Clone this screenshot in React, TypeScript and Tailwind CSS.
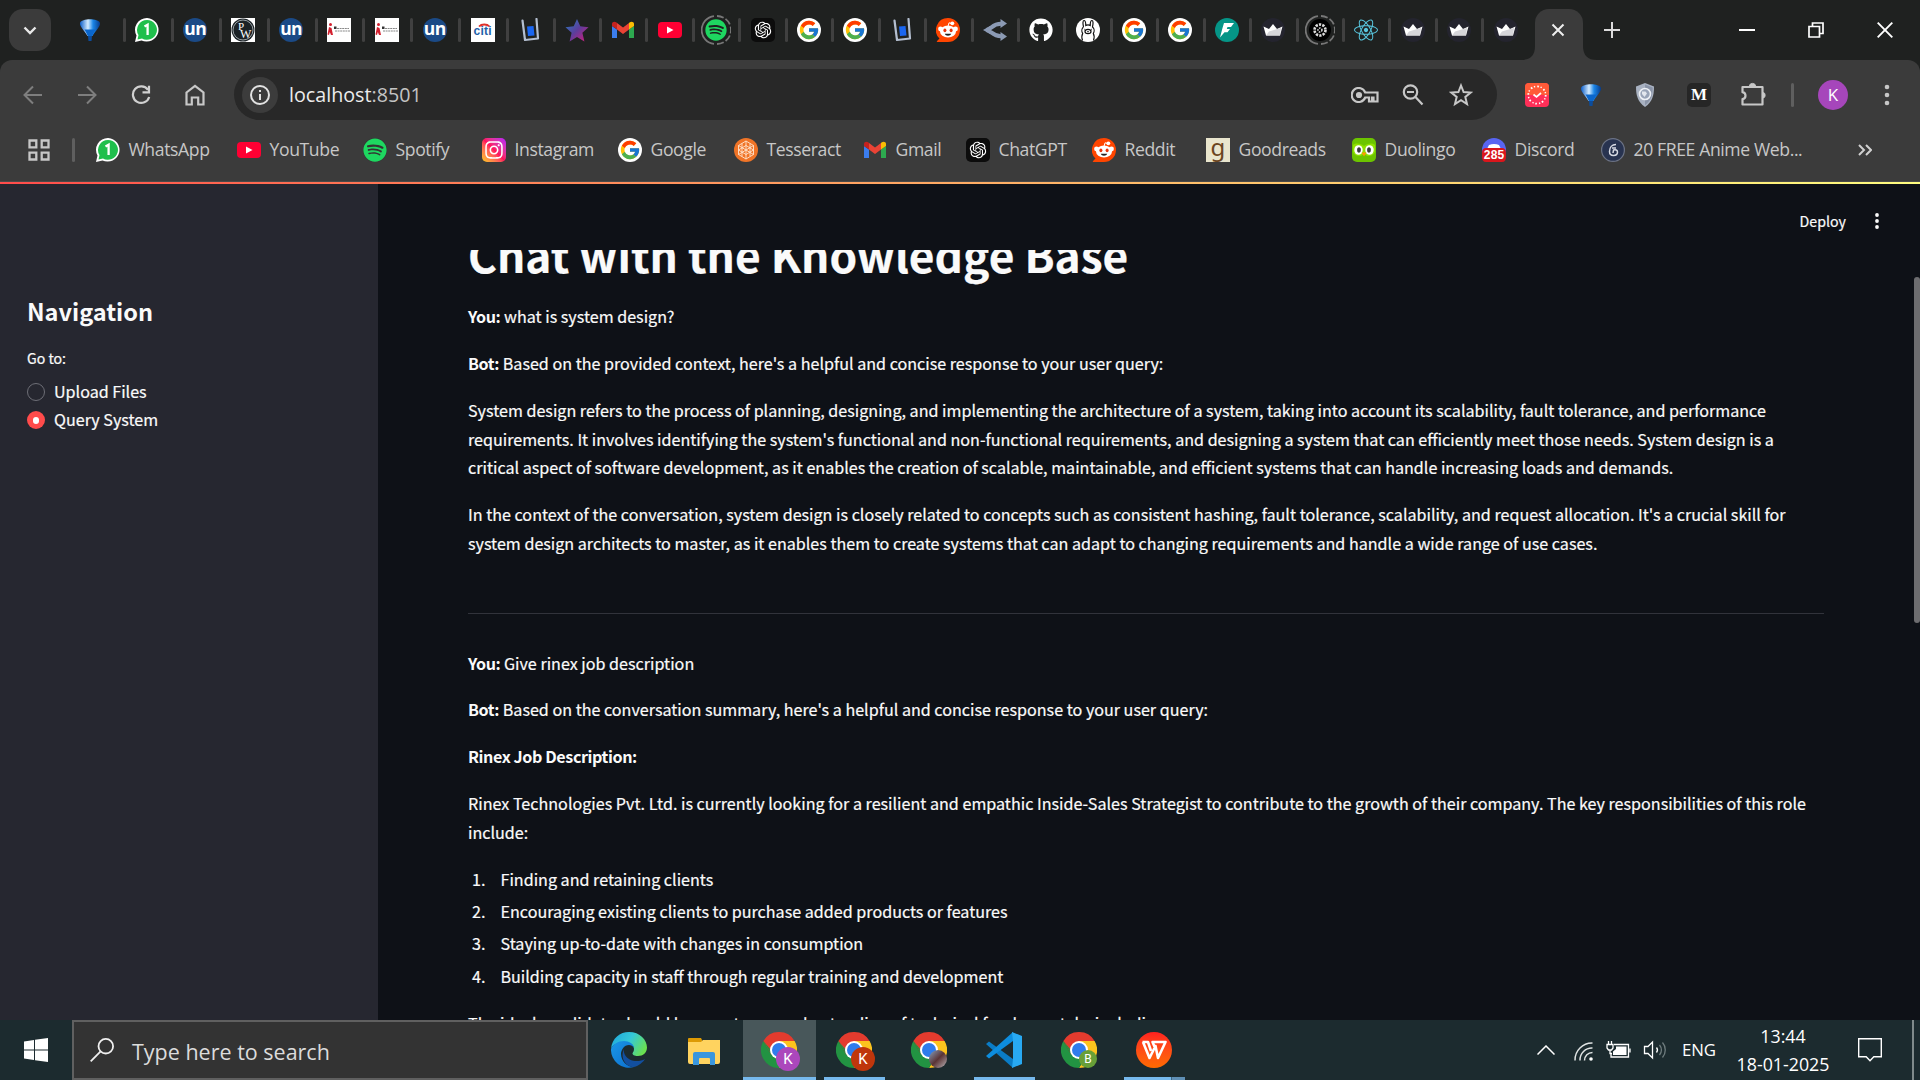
import React, { ReactNode, useId } from "react";
import { FcGoogle } from "react-icons/fc";
import { FaSpotify, FaInstagram, FaGithub, FaReact } from "react-icons/fa";
import { RiOpenaiFill } from "react-icons/ri";

/* ---------- site icons, all 24px ---------- */

const Balloon = () => {
  const g = useId();
  return (
    <svg viewBox="0 0 24 24" className="h-6 w-6">
      <defs>
        <linearGradient id={g} x1="0" x2="1">
          <stop offset="0" stopColor="#0a5cc8" />
          <stop offset=".4" stopColor="#d5ecff" />
          <stop offset=".65" stopColor="#1b86e8" />
          <stop offset="1" stopColor="#063a8a" />
        </linearGradient>
      </defs>
      <path d="M2 5C3.500 0 20.500 0 22 5c.8 3-5 8.500-7.500 13h-5C7 13.500 1.200 8 2 5Z" fill={`url(#${g})`} />
      <path d="M6.500 11.500h11C16.500 13.500 15 16 14.300 18h-4.600C9 16 7.500 13.500 6.500 11.500Z" fill="#0a66cc" />
      <path d="M10 18h4l-.5 5h-3Z" fill="#0c4c9c" />
    </svg>
  );
};
const WhatsApp = () => (
  <svg viewBox="0 0 24 24" className="h-6 w-6">
    <path d="M12.200 0A12 11.800 0 0 0 1.500 17.500L0 24l6.500-1.500A12 11.800 0 1 0 12.200 0Z" fill="#fff" />
    <path d="M12.200 2A10 9.900 0 0 0 3.500 17l-1 4.500 4.500-1A10 9.900 0 1 0 12.200 2Z" fill="#1fbf4c" />
    <path d="M9.500 8.500 12.600 6.700V17" fill="none" stroke="#fff" strokeWidth="2.300" />
  </svg>
);
const Un = () => (
  <span className="flex h-6 w-6 items-center justify-center rounded-full bg-[#1b4a86] pb-[3px] font-['Open_Sans'] text-[17.500px] leading-none font-bold tracking-[-0.03em] text-white">
    un
  </span>
);
const Pw = () => (
  <span className="flex h-6 w-6 items-center justify-center bg-white">
    <svg viewBox="0 0 24 24" className="h-6 w-6">
      <circle cx="12" cy="12" r="11.500" fill="#1b2226" />
      <circle cx="12" cy="12" r="10" fill="none" stroke="#b9c0c4" strokeWidth=".8" />
      <text x="7" y="12" fontSize="11" fill="#fff" fontFamily="Liberation Serif">P</text>
      <text x="9" y="20" fontSize="12" fill="#fff" fontFamily="Liberation Serif">W</text>
    </svg>
  </span>
);
const Company = () => (
  <svg viewBox="0 0 24 24" className="h-6 w-6">
    <path d="M0 0h24v24H0z" fill="#fff" />
    <circle cx="3.500" cy="6.500" r="1.500" fill="#d3202f" />
    <path d="M.5 16.500 2 9l2.500 1 1.500 7H4l-1.200-3-.8 3Z" fill="#d3202f" />
    <path d="M7 8.500h2.500v2.500H7z" fill="#333" />
    <path d="M10 10.500h12M8 13h15" stroke="#888" strokeWidth="1" strokeDasharray="2 .6" />
  </svg>
);
const Citi = () => (
  <svg viewBox="0 0 24 24" className="h-6 w-6">
    <path d="M0 0h24v24H0z" fill="#fff" />
    <path d="M8 8.500C10.500 5.800 16 5.800 18.500 8.500" fill="none" stroke="#e0312b" strokeWidth="1.800" />
    <text x="2.500" y="16.500" fontSize="12" fontWeight="700" fill="#1f62a8" fontFamily="Liberation Sans" textLength="18">citi</text>
  </svg>
);
const Glass = () => (
  <svg viewBox="0 0 24 24" className="h-6 w-6">
    <path d="M4.500 2.500 7 22 20 20.500 18.500 1" fill="none" stroke="#b4bfd0" strokeWidth="2.200" strokeLinejoin="round" strokeLinecap="round" />
    <path d="M9 8.500 15.500 8 16.500 17.500 10 18Z" fill="#1a66f0" />
  </svg>
);
const Star = () => {
  const g = useId();
  return (
    <svg viewBox="0 0 24 24" className="h-6 w-6">
      <defs>
        <linearGradient id={g} x1="0" x2="1" y1="0" y2="1">
          <stop offset="0.100" stopColor="#2f72b8" />
          <stop offset=".5" stopColor="#5d3d9c" />
          <stop offset="1" stopColor="#d81b7a" />
        </linearGradient>
      </defs>
      <path d="M12 1l3.300 7.300 8.200 1-6.100 5.500 2 8.700L12 19l-7.400 4.500 2-8.700L.5 9.300l8.200-1Z" fill={`url(#${g})`} />
    </svg>
  );
};
const Gmail = () => (
  <svg viewBox="0 0 24 24" className="h-6 w-6">
    <path d="M1 20V8l5 3.500V20Z" fill="#3b7ded" />
    <path d="M18 20v-8.500L23 8v12Z" fill="#2da94f" />
    <path d="M1 8V6c0-2.200 2.500-3 4.200-1.800L6 5v6.500Z" fill="#c5221f" />
    <path d="M18 11.500V5l.8-.8C20.500 3 23 3.800 23 6v2Z" fill="#fbbc04" />
    <path d="M6 11.500V5l6 4.600L18 5v6.500L12 16Z" fill="#ea4335" />
  </svg>
);
const YouTube = () => (
  <span className="flex h-4 w-6 items-center justify-center rounded-[4px] bg-[#ff0033]">
    <svg viewBox="0 0 8 8" className="h-2 w-2"><path d="M1 .5 7.500 4 1 7.500Z" fill="#fff" /></svg>
  </span>
);
const Spotify = () => (
  <span className="flex h-6 w-6 items-center justify-center rounded-full bg-[#333]">
    <FaSpotify className="h-6 w-6 text-[#1ed760]" />
  </span>
);
const Gpt = () => (
  <span className="flex h-6 w-6 items-center justify-center rounded-[5px] bg-[#0c0c0c]">
    <RiOpenaiFill className="h-[20px] w-[20px] text-white" />
  </span>
);
const Google = () => (
  <span className="flex h-6 w-6 items-center justify-center rounded-full bg-white">
    <FcGoogle className="h-[22px] w-[22px]" />
  </span>
);
const Reddit = () => (
  <svg viewBox="0 0 24 24" className="h-6 w-6">
    <path d="M12 0a12 12 0 0 0-8.500 20.500L1 23c-.5.500-.2 1 .4 1H12A12 12 0 0 0 12 0Z" fill="#ff4500" />
    <circle cx="4.500" cy="11" r="2.400" fill="#fff" />
    <circle cx="19.500" cy="11" r="2.400" fill="#fff" />
    <path d="M12 8.500 13 4.800l3 .8" fill="none" stroke="#fff" strokeWidth="1" />
    <circle cx="16.300" cy="5.300" r="1.900" fill="#fff" />
    <ellipse cx="12" cy="13.500" rx="8" ry="5.900" fill="#fff" />
    <ellipse cx="8.900" cy="12.300" rx="1.500" ry="1.900" fill="#e8340c" />
    <ellipse cx="15.100" cy="12.300" rx="1.500" ry="1.900" fill="#e8340c" />
    <path d="M8.800 15.700h6.400c-.5 2.600-5.900 2.600-6.400 0Z" fill="#222" />
  </svg>
);
const Fork = () => (
  <svg viewBox="0 0 24 24" className="h-6 w-6">
    <path d="M3 12C8 12 9 5.800 18 5.800M3 12c5 0 6 6.200 15 6.200" fill="none" stroke="#8b9ab4" strokeWidth="4" />
    <path d="M17.500 1 24 5.500 17.500 10ZM17.500 14l6.500 4.500-6.500 4.500ZM0 12 7 8v8Z" fill="#8b9ab4" />
  </svg>
);
const Llama = () => (
  <span className="flex h-6 w-6 items-center justify-center rounded-full bg-white">
    <svg viewBox="0 0 24 24" className="h-6 w-6" fill="none" stroke="#111" strokeWidth="1.200">
      <path d="M7.500 9C6.500 5 7 2.500 8 2.500S9.800 5 9.800 7.500c1.400-.7 3-.7 4.400 0 0-2.500.8-5 1.800-5s1.500 2.500.5 6.500c2 1.500 2 4.500.8 6.500 1.200 2 1 4.500.2 7M7.500 9c-2 1.500-2 4.500-.8 6.500-1.200 2-1 4.500-.2 7" />
      <ellipse cx="12" cy="13.500" rx="3" ry="2.200" />
      <path d="M8.500 11.500h.6M15 11.500h.6M12 13v1.200" strokeWidth="1.400" />
    </svg>
  </span>
);
const Flash = () => (
  <svg viewBox="0 0 24 24" className="h-6 w-6">
    <circle cx="12" cy="12" r="12" fill="#059587" />
    <path d="M9 5h10l-3 4h-3.500L11.800 11H15l-2.500 3.200h-3L5 19.500 7.500 10Z" fill="#fff" />
  </svg>
);
const Crown = () => (
  <svg viewBox="0 0 24 24" className="h-6 w-6">
    <circle cx="12" cy="12" r="12" fill="#24242e" />
    <path d="M2.500 8.500 8 11 12 6 16 11 21.500 8.500 19 17.500H5Z" fill="#fff" />
    <path d="M5 17.500 8 13.500l8-2.500 4-1-1 7.500Z" fill="#d6d6da" />
  </svg>
);
const DashedRing = ({ children }: { children: ReactNode }) => (
  <span className="relative flex h-[30px] w-[30px] items-center justify-center">
    <svg viewBox="0 0 30 30" className="absolute inset-0 h-[30px] w-[30px]">
      <path d="M13 1.100a14 14 0 0 0 0 27.800" fill="none" stroke="#777" strokeWidth="1.800" />
      <path d="M16 29a14 14 0 0 0 0-28" fill="none" stroke="#777" strokeWidth="1.800" strokeDasharray="7 2.200" />
    </svg>
    {children}
  </span>
);
const Tesseract = () => (
  <svg viewBox="0 0 24 24" className="h-6 w-6">
    <circle cx="12" cy="12" r="12" fill="#f07427" />
    <g fill="none" stroke="#ffe5d0" strokeWidth=".9">
      <path d="M12 3l7.500 4.500v9L12 21l-7.500-4.500v-9ZM12 3v18M4.500 7.500 12 12l7.500-4.500M4.500 16.500 12 12l7.500 4.500M8 5.400v13M16 5.400v13M4.500 12 12 7.500 19.500 12 12 16.500Z" />
    </g>
  </svg>
);
const Goodreads = () => (
  <span className="flex h-6 w-6 items-center justify-center bg-[#e9e5cd] pb-[6px] font-['Noto_Sans'] text-[24px] leading-none text-[#6b4420]">g</span>
);
const Duolingo = () => (
  <svg viewBox="0 0 24 24" className="h-6 w-6">
    <rect width="24" height="24" rx="5" fill="#6cc400" />
    <path d="M1 7c4-3 8-1 11 1 3-2 7-4 11-1v7c-2 5-8 5-11 2-3 3-9 3-11-2Z" fill="#8ee000" />
    <ellipse cx="6.500" cy="12" rx="4.200" ry="4.800" fill="#fff" />
    <ellipse cx="17.500" cy="12" rx="4.200" ry="4.800" fill="#fff" />
    <ellipse cx="7" cy="12" rx="1.900" ry="2.800" fill="#3c3c3c" />
    <ellipse cx="17" cy="12" rx="1.900" ry="2.800" fill="#3c3c3c" />
    <path d="M9.500 14.500h5L12 18.500Z" fill="#ff9a00" />
  </svg>
);
const Discord = () => (
  <svg viewBox="0 0 24 24" className="h-6 w-6">
    <circle cx="12" cy="12" r="12" fill="#5865f2" />
    <path d="M7 7c3-1.500 7-1.500 10 0l2 4H5Z" fill="#fff" />
    <path d="M0 15q0-5 4-5h16q4 0 4 5v4q0 5-4 5H4q-4 0-4-5Z" fill="#d9161c" />
    <text x="1.800" y="21.300" fontSize="12" fontWeight="700" fill="#fff" fontFamily="Liberation Sans" textLength="20.500">285</text>
  </svg>
);
const Anime = () => (
  <svg viewBox="0 0 24 24" className="h-6 w-6">
    <circle cx="12" cy="12" r="11.400" fill="#283350" stroke="#6c7385" strokeWidth="1.200" />
    <path d="M15 6.500c-4 0-6.500 3-6.500 7 0 3 2 4 4 4 2.500 0 4-1.500 4-3.500s-2-2.800-4-2l-.5 3M11 10h4" fill="none" stroke="#d7dae3" strokeWidth="1.500" />
  </svg>
);
const Insta = () => (
  <span className="flex h-6 w-6 items-center justify-center rounded-[5px] bg-linear-to-tr from-[#ffc800] via-[#ff0f5b] to-[#b800ff]">
    <FaInstagram className="h-[20px] w-[20px] text-white" />
  </span>
);

/* ---------- tab strip ---------- */

const wideTabs = [WhatsApp, Un, Pw, Un, Company, Company, Un, Citi];
const React24 = () => <FaReact className="h-6 w-6 text-[#58c4dc]" />;
const SpotifyRing = () => <DashedRing><FaSpotify className="h-[22px] w-[22px] text-[#1ed760]" /></DashedRing>;
const DotRing = () => (
  <DashedRing>
    <svg viewBox="0 0 24 24" className="h-6 w-6">
      <circle cx="12" cy="12" r="11" fill="#000" />
      <circle cx="12" cy="12" r="5.500" fill="none" stroke="#ddd" strokeWidth="2.600" strokeDasharray="2.300 1.150" />
      <circle cx="12" cy="12" r="2" fill="none" stroke="#ddd" strokeWidth="1.500" strokeDasharray="1.500 1" />
    </svg>
  </DashedRing>
);
const Hub = () => <FaGithub className="h-6 w-6 text-white" />;
const tabs = [Glass, Star, Gmail, YouTube, SpotifyRing, Gpt, Google, Google, Glass, Reddit, Fork, Hub, Llama, Google, Google, Flash, Crown, DotRing, React24, Crown, Crown, Crown];

function TabStrip() {
  return (
    <div className="flex h-[60px] items-center bg-[#1f2120]">
      <div className="ml-[9px] flex h-[42px] w-[42px] shrink-0 items-center justify-center rounded-[14px] bg-[#3b3b3b]">
        <svg viewBox="0 0 14 9" className="h-[9px] w-[14px]"><path d="M1.500 1.500 7 7l5.500-5.500" fill="none" stroke="#e8e8e8" strokeWidth="2.400" /></svg>
      </div>
      <div className="flex w-[72px] shrink-0 justify-center pl-[6px]"><Balloon /></div>
      {wideTabs.map((Icon, i) => (
        <div key={i} className="flex w-[47.900px] shrink-0 items-center">
          <span className="h-6 w-[3px] rounded-full bg-[#404040]" />
          <span className="flex flex-1 justify-center pr-[2px]"><Icon /></span>
        </div>
      ))}
      {tabs.map((Icon, i) => (
        <div key={i} className="flex w-[46.450px] shrink-0 items-center">
          <span className="h-6 w-[3px] rounded-full bg-[#404040]" />
          <span className="flex flex-1 justify-center pr-[1px]"><Icon /></span>
        </div>
      ))}
      <div className="-ml-[7px] flex h-[60px] shrink-0 items-end">
        <svg viewBox="0 0 14 14" className="h-[14px] w-[14px]"><path d="M0 14Q14 14 14 0V14Z" fill="#3b3b3b" /></svg>
        <div className="flex h-[51px] w-[48px] items-start justify-center rounded-t-[14px] bg-[#3b3b3b] pt-[14px] pr-[2px]">
          <svg viewBox="0 0 14 14" className="h-[14px] w-[14px]"><path d="M1.500 1.500l11 11M12.500 1.500l-11 11" stroke="#eee" strokeWidth="2" /></svg>
        </div>
        <svg viewBox="0 0 14 14" className="h-[14px] w-[14px]"><path d="M14 14Q0 14 0 0V14Z" fill="#3b3b3b" /></svg>
      </div>
      <svg viewBox="0 0 16 16" className="ml-[7px] h-4 w-4 shrink-0"><path d="M8 0v16M0 8h16" stroke="#dcdcdc" strokeWidth="2" /></svg>
      <div className="mr-[1px] ml-auto flex shrink-0">
        <span className="flex w-[69px] items-center justify-center"><svg viewBox="0 0 16 16" className="h-4 w-4"><path d="M0 8h16" stroke="#fff" strokeWidth="2" /></svg></span>
        <span className="flex w-[69px] items-center justify-center">
          <svg viewBox="0 0 16 16" className="h-4 w-4" fill="none" stroke="#fff" strokeWidth="1.700"><path d="M1 4.500h10.500V15H1zM4.500 4V1H15v10.500h-3" /></svg>
        </span>
        <span className="flex w-[69px] items-center justify-center"><svg viewBox="0 0 16 16" className="h-4 w-4"><path d="M.7.700l14.600 14.600M15.300.700.7 15.300" stroke="#fff" strokeWidth="1.900" /></svg></span>
      </div>
    </div>
  );
}

/* ---------- toolbar ---------- */

const Cell = ({ children, w = "w-[54px]" }: { children: ReactNode; w?: string }) => (
  <span className={`flex shrink-0 items-center justify-center ${w}`}>{children}</span>
);

function Toolbar() {
  return (
    <div className="bg-[#1f2120]">
      <div className="flex h-[69px] items-center rounded-t-[12px] bg-[#3b3b3b] pl-[6px]">
        <Cell><svg viewBox="0 0 20 20" className="h-5 w-5" fill="none" stroke="#7e7e7e" strokeWidth="2"><path d="M19 10H2M10 1.500 1.500 10 10 18.500" /></svg></Cell>
        <Cell><svg viewBox="0 0 20 20" className="h-5 w-5" fill="none" stroke="#7e7e7e" strokeWidth="2"><path d="M1 10h17M10 1.500 18.500 10 10 18.500" /></svg></Cell>
        <Cell><svg viewBox="0 0 20 20" className="h-5 w-5" fill="none" stroke="#d0d0d0" strokeWidth="2.200"><path d="M17 4.800A8.300 8.300 0 1 0 18.200 12M18 0.800V7.300H11.500" /></svg></Cell>
        <Cell><svg viewBox="0 0 20 22" className="h-[22px] w-5" fill="none" stroke="#c8c8c8" strokeWidth="2.200"><path d="M1.500 8.500 10 1.800l8.500 6.700v12h-5.300v-7H6.800v7H1.500Z" /></svg></Cell>
        <div className="ml-3 flex h-[51px] w-[1263px] shrink-0 items-center rounded-full bg-[#282828] pr-3 pl-2">
          <span className="flex h-9 w-9 items-center justify-center rounded-full bg-[#3c3c3c]">
            <svg viewBox="0 0 20 20" className="h-5 w-5" fill="none" stroke="#e2e2e2" strokeWidth="2"><circle cx="10" cy="10" r="9" /><path d="M10 9v6M10 5v2" /></svg>
          </span>
          <span className="ml-[11px] font-['Open_Sans'] text-[19.700px] leading-none text-[#ececec]">localhost<span className="text-[#c4c4c4]">:8501</span></span>
          <div className="ml-auto flex">
            <Cell w="w-12">
              <svg viewBox="0 0 28 16" className="h-4 w-7" fill="none" stroke="#c7c7c7" strokeWidth="2.200"><path d="M14.200 5.500A7 7 0 1 0 14.200 10.500H18v4h3v-4h1.500v4H26.500V5.500Z" /><circle cx="8" cy="8" r="2" fill="#c7c7c7" /></svg>
            </Cell>
            <Cell w="w-12">
              <svg viewBox="0 0 22 22" className="h-[22px] w-[22px]" fill="none" stroke="#c7c7c7" strokeWidth="2.200"><circle cx="8.500" cy="8" r="6.700" /><path d="M13.500 13l7 7.500M5 8h7" /></svg>
            </Cell>
            <Cell w="w-12">
              <svg viewBox="0 0 24 24" className="h-6 w-6" fill="none" stroke="#c7c7c7" strokeWidth="2"><path d="M12 2.500l2.600 6.500 7.200.5-5.500 4.500 1.700 7L12 17.200 6 21l1.700-7-5.500-4.500 7.200-.5Z" /></svg>
            </Cell>
          </div>
        </div>
        <div className="ml-[13px] flex items-center">
          <Cell>
            <svg viewBox="0 0 24 24" className="h-6 w-6">
              <rect width="24" height="24" rx="4" fill="#ff2f58" />
              <path d="M0 12V4q0-4 4-4h16q4 0 4 4v8Z" fill="#ff5a38" />
              <circle cx="12" cy="12" r="8.700" fill="none" stroke="#fff" strokeWidth="1.800" strokeDasharray="1.700 5.133" />
              <circle cx="12" cy="12" r="8.700" fill="none" stroke="#fff" strokeWidth="1.500" strokeDasharray="1.300 5.533" strokeDashoffset="-3.400" />
              <path d="M8.500 11.500 11.500 14l4.500-4" fill="none" stroke="#fff" strokeWidth="1.700" />
            </svg>
          </Cell>
          <Cell><Balloon /></Cell>
          <Cell>
            <svg viewBox="0 0 24 24" className="h-6 w-6">
              <path d="M12 0l9 3.500c0 9-1.500 15-9 20.500C4.500 18.500 3 12.500 3 3.500Z" fill="#a9b2c2" />
              <path d="M12 1.500l7.700 3c0 7.500-1.500 13-7.700 17.700Z" fill="#8a94a8" />
              <circle cx="12" cy="11" r="5.500" fill="#99a4b8" stroke="#eef1f6" strokeWidth="1.600" />
              <path d="M9 8.500h3.500l1.500 2-2.500 3.500L9 11Z" fill="#e3e7ee" />
            </svg>
          </Cell>
          <Cell><span className="flex h-6 w-6 items-center justify-center rounded-[5px] bg-[#262626] font-['Liberation_Serif'] text-[17px] leading-none font-bold text-white">M</span></Cell>
          <Cell>
            <svg viewBox="0 0 26 26" className="h-[26px] w-[26px]" fill="none" stroke="#c7c7c7" strokeWidth="2.200"><path d="M2.500 5h20v17.500h-20v-5.300c4-.7 4-6.200 0-7Z" strokeLinejoin="round" /><path d="M9.500 4a3 2.600 0 0 1 6 0ZM23.500 10.500a2 2.800 0 0 1 0 5.500Z" fill="#c7c7c7" strokeWidth="1" /></svg>
          </Cell>
          <Cell w="w-[25px]"><span className="h-6 w-[3px] rounded-full bg-[#5f5f5f]" /></Cell>
          <Cell w="w-14"><span className="flex h-[30px] w-[30px] items-center justify-center rounded-full bg-[#a646bb] font-['Open_Sans'] text-[17px] leading-none text-white">K</span></Cell>
          <Cell w="w-[52px]"><svg viewBox="0 0 6 22" className="h-[22px] w-[6px]" fill="#c7c7c7"><circle cx="3" cy="3" r="2.300" /><circle cx="3" cy="11" r="2.300" /><circle cx="3" cy="19" r="2.300" /></svg></Cell>
        </div>
      </div>
    </div>
  );
}

const bookmarks: { w: string; icon: ReactNode; label: string }[] = [
  { w: "w-[141px]", icon: <WhatsApp />, label: "WhatsApp" },
  { w: "w-[126px]", icon: <YouTube />, label: "YouTube" },
  { w: "w-[119px]", icon: <Spotify />, label: "Spotify" },
  { w: "w-[136px]", icon: <Insta />, label: "Instagram" },
  { w: "w-[116px]", icon: <Google />, label: "Google" },
  { w: "w-[129px]", icon: <Tesseract />, label: "Tesseract" },
  { w: "w-[103px]", icon: <Gmail />, label: "Gmail" },
  { w: "w-[126px]", icon: <Gpt />, label: "ChatGPT" },
  { w: "w-[114px]", icon: <Reddit />, label: "Reddit" },
  { w: "w-[146px]", icon: <Goodreads />, label: "Goodreads" },
  { w: "w-[130px]", icon: <Duolingo />, label: "Duolingo" },
  { w: "w-[119px]", icon: <Discord />, label: "Discord" },
  { w: "w-[230px]", icon: <Anime />, label: "20 FREE Anime Web..." },
];

function BookmarksBar() {
  return (
    <div className="flex h-[53px] items-center border-b border-[#4a4a4a] bg-[#3b3b3b] pb-[10px] pl-[28px]">
      <svg viewBox="0 0 22 22" className="h-[22px] w-[22px] shrink-0" fill="none" stroke="#c7c7c7" strokeWidth="2.300"><path d="M1.500 1.500h6.800v6.800H1.500zM13.700 1.500h6.800v6.800h-6.800zM1.500 13.700h6.800v6.800H1.500zM13.700 13.700h6.800v6.800h-6.800z" /></svg>
      <span className="ml-[22px] h-6 w-[3px] shrink-0 rounded-full bg-[#5f5f5f]" />
      <div className="ml-[21px] flex">
        {bookmarks.map((b) => (
          <div key={b.label} className={`flex shrink-0 items-center gap-[8.500px] whitespace-nowrap ${b.w}`}>
            {b.icon}
            <span className="pb-px font-['Open_Sans'] text-[17.600px] leading-[25px] tracking-[-0.022em] text-[#c7c7c7]">{b.label}</span>
          </div>
        ))}
      </div>
      <svg viewBox="0 0 14 12" className="ml-[27px] h-3 w-[14px] shrink-0" fill="none" stroke="#d0d0d0" strokeWidth="2"><path d="M1 1l5 5-5 5M8 1l5 5-5 5" /></svg>
    </div>
  );
}

/* ---------- page ---------- */

const Option = ({ label, on }: { label: string; on?: boolean }) => (
  <label className="flex h-7 items-center gap-[9px] text-[16.100px] leading-7">
    {on ? (
      <span className="mt-[2px] flex h-[18px] w-[18px] items-center justify-center rounded-full bg-[#ff4b4b]"><span className="h-[7px] w-[6px] rounded-full bg-white" /></span>
    ) : (
      <span className="mt-[2px] h-[18px] w-[18px] rounded-full border border-[#6d6e76]" />
    )}
    <span>{label}</span>
  </label>
);

const duties = [
  "Finding and retaining clients",
  "Encouraging existing clients to purchase added products or features",
  "Staying up-to-date with changes in consumption",
  "Building capacity in staff through regular training and development",
];

function Page() {
  return (
    <div className="flex h-[836px] overflow-hidden bg-[#0e1117] font-['Noto_Sans_CJK_SC',sans-serif] text-[#fafafa] [-webkit-text-stroke:0.2px]">
      <aside className="w-[378px] shrink-0 bg-[#262730] pt-[112.500px] pl-[27px]">
        <h2 className="text-[23.500px] leading-[29px] font-bold [-webkit-text-stroke:0]">Navigation</h2>
        <p className="mt-[21.500px] mb-[8px] text-[14.100px] leading-[22px]">Go to:</p>
        <Option label="Upload Files" />
        <Option label="Query System" on />
      </aside>
      <div className="flex flex-1 flex-col">
        <header className="flex h-[66px] shrink-0 items-center justify-end pt-[8px] pr-[41px]">
          <span className="text-[14.200px] leading-5">Deploy</span>
          <svg viewBox="0 0 4 16" className="ml-[29px] h-4 w-1" fill="#fafafa"><circle cx="2" cy="2" r="1.900" /><circle cx="2" cy="8" r="1.900" /><circle cx="2" cy="14" r="1.900" /></svg>
        </header>
        <main className="flex min-h-0 flex-1 overflow-hidden">
          <div className="-mt-[22px] ml-[90px] w-[1356px] text-[16.120px] leading-[28.800px] [&_b]:tracking-[-0.025em] [&_b]:[-webkit-text-stroke:0] [&>p]:mb-[18px]">
            <h1 className="mb-[21.200px] text-[44.250px] leading-[53px] font-bold">Chat with the Knowledge Base</h1>
            <p><b>You:</b> what is system design?</p>
            <p><b>Bot:</b> Based on the provided context, here's a helpful and concise response to your user query:</p>
            <p className="whitespace-nowrap">
              System design refers to the process of planning, designing, and implementing the architecture of a system, taking into account its scalability, fault tolerance, and performance<br />
              requirements. It involves identifying the system's functional and non-functional requirements, and designing a system that can efficiently meet those needs. System design is a<br />
              critical aspect of software development, as it enables the creation of scalable, maintainable, and efficient systems that can handle increasing loads and demands.
            </p>
            <p className="whitespace-nowrap">
              In the context of the conversation, system design is closely related to concepts such as consistent hashing, fault tolerance, scalability, and request allocation. It's a crucial skill for<br />
              system design architects to master, as it enables them to create systems that can adapt to changing requirements and handle a wide range of use cases.
            </p>
            <hr className="mt-[55.200px] mb-[34.600px] border-t border-[#31333b]" />
            <p><b>You:</b> Give rinex job description</p>
            <p><b>Bot:</b> Based on the conversation summary, here's a helpful and concise response to your user query:</p>
            <p><b>Rinex Job Description:</b></p>
            <p className="whitespace-nowrap">
              Rinex Technologies Pvt. Ltd. is currently looking for a resilient and empathic Inside-Sales Strategist to contribute to the growth of their company. The key responsibilities of this role<br />
              include:
            </p>
            <ol className="mb-[18px] flex flex-col gap-[3.600px]">
              {duties.map((d, i) => (
                <li key={d} className="flex">
                  <span className="w-[32.500px] shrink-0 pl-[4px]">{i + 1}.</span>
                  <span>{d}</span>
                </li>
              ))}
            </ol>
            <p>The ideal candidate should have a strong understanding of technical fundamentals, including:</p>
          </div>
          <div className="mt-[27px] ml-auto h-[346px] w-[6px] rounded-full bg-[#6d6d70]" />
        </main>
      </div>
    </div>
  );
}

/* ---------- taskbar ---------- */

const Chrome = ({ badge, text }: { badge?: string; text?: string }) => (
  <span className="relative h-9 w-9">
    <svg viewBox="0 0 36 36" className="h-9 w-9">
      <path d="M18 18 2.410 9A18 18 0 0 1 33.590 9Z" fill="#e33b2e" />
      <path d="M18 9H33.590A18 18 0 0 1 18 36L25.800 22.500Z" fill="#fcc31e" />
      <path d="M2.410 9A18 18 0 0 0 18 36l7.800-13.500L18 18 10.200 22.500Z" fill="#229342" />
      <path d="M2.410 9 10.200 22.500 18 18V9Z" fill="#e33b2e" />
      <path d="M2.410 9 10.200 22.500 10 18Z" fill="#229342" />
      <circle cx="18" cy="18" r="9" fill="#fff" />
      <circle cx="18" cy="18" r="7" fill="#2f7cec" />
    </svg>
    {badge && <span className={`absolute flex items-center justify-center rounded-full font-['Roboto'] leading-none text-white ${badge}`}>{text}</span>}
  </span>
);
const Edge = () => {
  const g = useId();
  const b = useId();
  return (
    <svg viewBox="0 0 36 36" className="h-9 w-9">
      <defs>
        <linearGradient id={g} x1="0" x2="1" y1=".2" y2=".6"><stop offset="0" stopColor="#1fa9dc" /><stop offset=".5" stopColor="#35c8d8" /><stop offset="1" stopColor="#6be04e" /></linearGradient>
        <linearGradient id={b} x1="0" x2="1" y1="0" y2="1"><stop offset="0" stopColor="#1b97e6" /><stop offset="1" stopColor="#0b6fd0" /></linearGradient>
      </defs>
      <path d="M0 17C1 6 9 0 18 0c11 0 18 8 18 15.500 0 5-4 8.500-9 8.500-4 0-5.500-1.500-5.500-2.500s1.500-1.500 1.500-4.500c0-4-4-7-9-7C8 10 2 12 0 17Z" fill={`url(#${g})`} />
      <path d="M0 17c2-5 7-8 13-8 5 0 10 3 10 7-1-2-3-3-5-3-5 0-8 5-8 9 0 7 6 13 13 13A18 18 0 0 1 0 17Z" fill={`url(#${b})`} />
      <path d="M13 17c-4 8 1 18 10 18 5-1 9-5 11-8-7 4-17 2-20-4-1-2-1.500-4-1-6Z" fill="#124f9f" />
    </svg>
  );
};
const Folder = () => (
  <svg viewBox="0 0 32 28" className="mt-[2px] h-7 w-8">
    <path d="M0 2q0-1 1-1h12l2 4H0Z" fill="#dd9a04" />
    <path d="M0 5h13l2-2h17v22q0 2-2 2H2q-2 0-2-2Z" fill="#ffd35f" />
    <path d="M5 28V17q0-2 2-2h18q2 0 2 2v11h-5v-6q0-1-1-1H12q-1 0-1 1v6Z" fill="#3a96dd" />
  </svg>
);
const Code = () => (
  <svg viewBox="0 0 36 36" className="h-9 w-9">
    <path d="M0 12 3 9.500 27 27v9Z" fill="#0a7cc6" />
    <path d="M0 24l3 2.500L27 9V0Z" fill="#0d8dde" />
    <path d="M26 0l10 4v28l-10 4 1-9V9Z" fill="#28a9f2" />
  </svg>
);
const Wps = () => (
  <span className="flex h-9 w-9 items-center justify-center rounded-full bg-linear-to-b from-[#ff1f1f] to-[#ff6a00]">
    <svg viewBox="0 0 26 20" className="h-5 w-[26px]" fill="none" stroke="#fff" strokeWidth="2.600" strokeLinejoin="round"><path d="M1.500 2h5.500L10 11M2 2l6.500 16L14.500 6l2.500 12L24.500 2H11.500l3 7" /></svg>
  </span>
);

const Task = ({ children, active, bar }: { children: ReactNode; active?: boolean; bar?: boolean }) => (
  <div className="flex h-[60px] w-[75px] shrink-0 justify-center">
    <div className={`flex flex-col items-center justify-between ${active ? "w-[73px] bg-[#48575a]" : "w-[61px]"}`}>
      <span className="flex h-[57px] items-center pt-[3px]">{children}</span>
      <span className={`h-[3px] w-full ${bar ? "bg-[#76b9ed]" : ""}`} />
    </div>
  </div>
);

function Taskbar() {
  return (
    <div className="flex h-[60px] items-center bg-[#1c2b2f] font-['Open_Sans'] text-white">
      <span className="flex w-[72px] shrink-0 justify-center">
        <svg viewBox="0 0 24 24" className="h-6 w-6" fill="#fff"><path d="M0 3.400 10 2v9.400H0ZM11 1.800 24 0v11.400H11ZM0 12.400h10V22L0 20.600ZM11 12.400h13V24l-13-1.800Z" /></svg>
      </span>
      <div className="flex h-[60px] w-[516px] shrink-0 items-center border-2 border-[#606060] bg-[#333] pl-4">
        <svg viewBox="0 0 24 24" className="h-6 w-6" fill="none" stroke="#f0f0f0" strokeWidth="1.800"><circle cx="15.800" cy="8.200" r="7.300" /><path d="M10.600 13.400.7 23.300" /></svg>
        <span className="mt-1 ml-[18px] text-[21.500px] leading-none text-[#dcdcdc]">Type here to search</span>
      </div>
      <div className="ml-[3.500px] flex">
        <Task><Edge /></Task>
        <Task><Folder /></Task>
        <Task active bar><Chrome badge="top-[15px] left-[15px] h-6 w-6 bg-[#ab47bc] text-[15px]" text="K" /></Task>
        <Task bar><Chrome badge="top-[15px] left-[15px] h-6 w-6 bg-[#bf360c] text-[15px]" text="K" /></Task>
        <Task><Chrome badge="top-[18px] left-[18px] h-[18px] w-[18px] bg-linear-to-br from-[#7fa6c8] via-[#5a3436] to-[#b8b8bd]" text="" /></Task>
        <Task bar><Code /></Task>
        <Task><Chrome badge="top-[18px] left-[18px] h-[18px] w-[18px] bg-[#689f38] text-[12px]" text="B" /></Task>
        <div className="flex h-[60px] w-[75px] flex-col pl-[7px]">
          <span className="flex h-[57px] w-[61px] items-center justify-center pt-[3px]"><Wps /></span>
          <span className="flex h-[3px]"><i className="w-[47px] bg-[#76b9ed]" /><i className="w-[1px] bg-[#3f6783]" /><i className="w-[13px] bg-[#5f8fb5]" /></span>
        </div>
      </div>
      <div className="ml-auto flex h-full items-center text-[17.800px] leading-none">
        <Cell w="w-9"><svg viewBox="0 0 18 10" className="-ml-[2px] h-[10px] w-[18px]" fill="none" stroke="#fff" strokeWidth="1.500"><path d="M.5 9.500 9 1l8.500 8.500" /></svg></Cell>
        <Cell w="w-9"><svg viewBox="0 0 19 19" className="mt-[3px] h-[19px] w-[19px]" fill="none" stroke="#dfe3e3" strokeWidth="1.500"><path d="M1 18.500A17 17 0 0 1 18.500 1M6 18.500A12 12 0 0 1 18.500 6M10.500 18.500a8 8 0 0 1 8-8" /><circle cx="17" cy="17" r="1.800" fill="#fff" stroke="none" /></svg></Cell>
        <Cell w="w-9"><svg viewBox="0 0 25 18" className="-mt-[3px] -ml-[2px] h-[18px] w-[25px]" fill="none" stroke="#fff" strokeWidth="1.300"><path d="M8 4.500h14.500v12.500H5V13M24 8.500v4" /><path d="M10 6.500h10.500V15H7v-3.500L10 9Z" fill="#fff" stroke="none" /><path d="M1 4.500h6v3.500L5.500 10H2.500L1 8ZM2.500 4V1M5.500 4V1M4 10v3.500h2" /></svg></Cell>
        <Cell w="w-9"><svg viewBox="0 0 24 20" className="-ml-[1px] h-5 w-6" fill="none" stroke="#fff" strokeWidth="1.300"><path d="M1.500 6.500H5L9.500 2v16L5 13.500H1.500Z" /><path d="M13.500 7.500a4 4 0 0 1 0 5" /><path d="M16.500 5a7.500 7.500 0 0 1 0 10M19.500 2.500a11.500 11.500 0 0 1 0 15" stroke="#6f7c7e" /></svg></Cell>
        <Cell w="w-[54px]"><span className="pr-[2px] text-[16.800px]">ENG</span></Cell>
        <div className="flex w-28 flex-col items-center gap-[10px] pt-[2px]"><span>13:44</span><span>18-01-2025</span></div>
        <Cell w="w-[62px]"><svg viewBox="0 0 24 24" className="h-6 w-6" fill="none" stroke="#fff" strokeWidth="1.400"><path d="M.7.700h22.600v18h-7.500L12 22.800 8.200 18.700H.7Z" /></svg></Cell>
        <span className="ml-[11px] h-full w-2 border-l-2 border-[#7f8a8b]" />
      </div>
    </div>
  );
}

export default function App() {
  return (
    <div className="h-[1080px] w-[1920px] overflow-hidden">
      <TabStrip />
      <Toolbar />
      <BookmarksBar />
      <div className="h-[2px] bg-linear-to-r from-[#ff4b4b] to-[#fffd80]" />
      <Page />
      <Taskbar />
    </div>
  );
}
